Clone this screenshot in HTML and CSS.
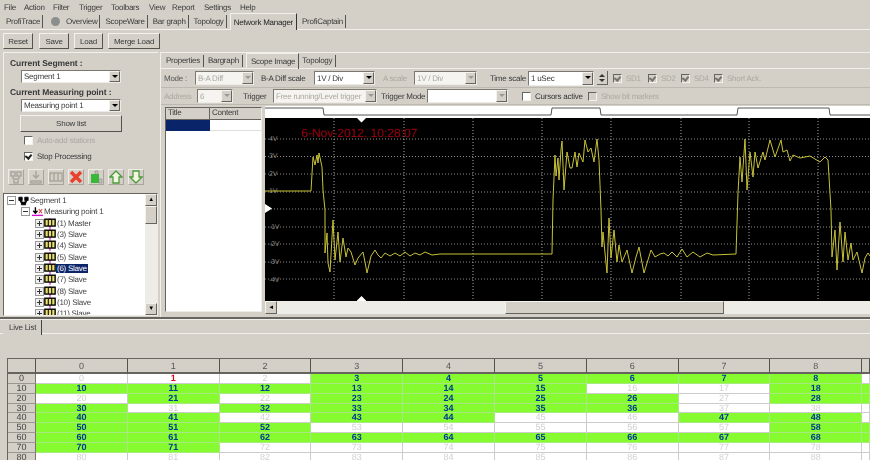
FILE: index.html
```html
<!DOCTYPE html>
<html lang="en">

<head>
    <meta charset="UTF-8">
    <title>ProfiTrace - Network Manager</title>
    <link rel="stylesheet" href="styles.css">
</head>

<body>
<svg class="defs" width="0" height="0">
    <symbol id="station" viewBox="0 0 14 12">
        <path d="M7 0V12" stroke="#d010d0" stroke-width="1.4"/>
        <rect x="1" y="1" width="12" height="8" fill="#e8e070" stroke="#000" stroke-width="1.6"/>
        <path d="M5 1V9M9 1V9" stroke="#000" stroke-width="1.2"/>
    </symbol>
    <symbol id="expand" viewBox="0 0 9 9">
        <rect x="0.5" y="0.5" width="8" height="8" fill="#eee" stroke="#999"/>
        <path d="M2 4.5H7M4.5 2V7" stroke="#333"/>
    </symbol>
    <symbol id="collapse" viewBox="0 0 9 9">
        <rect x="0.5" y="0.5" width="8" height="8" fill="#fff" stroke="#999"/>
        <path d="M2 4.5H7" stroke="#333"/>
    </symbol>
</svg>

<div class="menu">
    <span class="w-file">File</span><span class="w-action">Action</span><span class="w-filter">Filter</span><span class="w-trigger">Trigger</span><span class="w-toolbars">Toolbars</span><span class="w-view">View</span><span class="w-report">Report</span><span class="w-settings">Settings</span><span>Help</span>
</div>

<div class="main-tabs">
    <span class="main-tab">ProfiTrace</span>
    <span class="main-tab tab-overview"><i class="led"></i>Overview</span>
    <span class="main-tab">ScopeWare</span>
    <span class="main-tab">Bar graph</span>
    <span class="main-tab">Topology</span>
    <span class="main-tab active">Network Manager</span>
    <span class="main-tab">ProfiCaptain</span>
</div>

<div class="toolbar">
    <button class="btn btn-reset">Reset</button>
    <button class="btn btn-save">Save</button>
    <button class="btn btn-load">Load</button>
    <button class="btn btn-merge">Merge Load</button>
</div>

<div class="work">
    <div class="left">
        <div class="segment-panel">
            <div class="panel-title">Current Segment :</div>
            <div class="combo combo-left"><span>Segment 1</span><i class="drop"></i></div>
            <div class="panel-title title-point">Current Measuring point :</div>
            <div class="combo combo-left"><span>Measuring point 1</span><i class="drop"></i></div>
            <button class="btn btn-list">Show list</button>
            <label class="check-row muted"><i class="check"></i>Auto-add stations</label>
            <label class="check-row"><i class="check checked"></i>Stop Processing</label>
            <div class="icon-row">
                <span class="icon-btn"><svg width="14" height="14" viewBox="0 0 14 14"><path d="M2 2h4v4H2zM8 2h4v4H8zM5 9h4v4H5zM4 6v3M10 6v3" fill="none" stroke="#aaa69c" stroke-width="1.5"/></svg></span>
                <span class="icon-btn"><svg width="14" height="14" viewBox="0 0 14 14"><path d="M7 1v6M4 5l3 3 3-3M2 11h10v2H2z" fill="none" stroke="#aaa69c" stroke-width="1.5"/></svg></span>
                <span class="icon-btn"><svg width="14" height="14" viewBox="0 0 14 14"><path d="M1 3h12v8H1zM5 3v8M9 3v8" fill="none" stroke="#aaa69c" stroke-width="1.5"/></svg></span>
                <span class="icon-btn"><svg width="14" height="14" viewBox="0 0 14 14"><path d="M2 2L12 12M12 2L2 12" stroke="#e8402c" stroke-width="3.4"/></svg></span>
                <span class="icon-btn"><svg width="14" height="14" viewBox="0 0 14 14"><path d="M2 4h8v9H2z" fill="#38b838"/><path d="M6 1h3v3H6zM10 9h3v4h-3z" fill="#c8c4b8" stroke="#888" stroke-width=".6"/></svg></span>
                <span class="icon-btn"><svg width="14" height="14" viewBox="0 0 14 14"><path d="M7 1L13 7H10V13H4V7H1Z" fill="#f2f6e0" stroke="#4c9a3c" stroke-width="1.3"/></svg></span>
                <span class="icon-btn"><svg width="14" height="14" viewBox="0 0 14 14"><path d="M7 13L13 7H10V1H4V7H1Z" fill="#f2f6e0" stroke="#4c9a3c" stroke-width="1.3"/></svg></span>
            </div>
        </div>

        <div class="tree">
            <div class="tree-list">
                <div class="node"><svg class="toggle" width="9" height="9"><use href="#collapse"/></svg><svg class="node-icon" width="11" height="10" viewBox="0 0 13 11"><path d="M1 1h4v4H1zM8 1h4v4H8zM4 7h5v3H4zM3 5v2h3M10 5v2H7" fill="#000" stroke="#000"/></svg>Segment 1</div>
                <div class="node depth-1"><svg class="toggle" width="9" height="9"><use href="#collapse"/></svg><svg class="node-icon" width="11" height="10" viewBox="0 0 13 11"><path d="M0 9.5H13" stroke="#d010d0" stroke-width="1.6"/><path d="M4 0V6M1.5 4L4 7L6.5 4" fill="none" stroke="#000" stroke-width="1.6"/><path d="M8 2L12 7M12 2L8 7" stroke="#e03030" stroke-width="1.2"/></svg>Measuring point 1</div>
                <div class="node depth-2"><svg class="toggle" width="9" height="9"><use href="#expand"/></svg><svg class="station" width="12" height="11"><use href="#station"/></svg>(1) Master</div>
                <div class="node depth-2"><svg class="toggle" width="9" height="9"><use href="#expand"/></svg><svg class="station" width="12" height="11"><use href="#station"/></svg>(3) Slave</div>
                <div class="node depth-2"><svg class="toggle" width="9" height="9"><use href="#expand"/></svg><svg class="station" width="12" height="11"><use href="#station"/></svg>(4) Slave</div>
                <div class="node depth-2"><svg class="toggle" width="9" height="9"><use href="#expand"/></svg><svg class="station" width="12" height="11"><use href="#station"/></svg>(5) Slave</div>
                <div class="node depth-2"><svg class="toggle" width="9" height="9"><use href="#expand"/></svg><svg class="station" width="12" height="11"><use href="#station"/></svg><span class="selected">(6) Slave</span></div>
                <div class="node depth-2"><svg class="toggle" width="9" height="9"><use href="#expand"/></svg><svg class="station" width="12" height="11"><use href="#station"/></svg>(7) Slave</div>
                <div class="node depth-2"><svg class="toggle" width="9" height="9"><use href="#expand"/></svg><svg class="station" width="12" height="11"><use href="#station"/></svg>(8) Slave</div>
                <div class="node depth-2"><svg class="toggle" width="9" height="9"><use href="#expand"/></svg><svg class="station" width="12" height="11"><use href="#station"/></svg>(10) Slave</div>
                <div class="node depth-2"><svg class="toggle" width="9" height="9"><use href="#expand"/></svg><svg class="station" width="12" height="11"><use href="#station"/></svg>(11) Slave</div>
            </div>
            <div class="tree-scroll">
                <span class="arrow-btn">&#9650;</span>
                <span class="tree-thumb"></span>
                <span class="arrow-btn tree-down">&#9660;</span>
            </div>
        </div>
    </div>

    <div class="right">
        <div class="sub-tabs">
            <span class="sub-tab">Properties</span>
            <span class="sub-tab">Bargraph</span>
            <span class="sub-tab active">Scope Image</span>
            <span class="sub-tab">Topology</span>
        </div>
        <div class="control-row">
            <span class="lbl lbl-mode muted-dark">Mode :</span>
            <div class="combo off c-mode"><span>B-A Diff</span><i class="drop"></i></div>
            <span class="lbl lbl-diff">B-A Diff scale</span>
            <div class="combo c-diff"><span>1V / Div</span><i class="drop"></i></div>
            <span class="lbl lbl-a muted">A scale</span>
            <div class="combo off c-a"><span>1V / Div</span><i class="drop"></i></div>
            <span class="lbl lbl-time">Time scale</span>
            <div class="combo c-time"><span>1 uSec</span><i class="drop"></i></div>
            <span class="spin"><i class="spin-up"></i><i class="spin-down"></i></span>
            <label class="opt opt-1 muted"><i class="check checked off"></i>SD1</label>
            <label class="opt opt-2 muted"><i class="check checked off"></i>SD2</label>
            <label class="opt opt-3 muted"><i class="check checked off"></i>SD4</label>
            <label class="opt opt-4 muted"><i class="check checked off"></i>Short Ack.</label>
        </div>
        <div class="control-row row-two">
            <span class="lbl lbl-addr muted">Address</span>
            <div class="combo off c-addr"><span>6</span><i class="drop"></i></div>
            <span class="lbl lbl-trigger">Trigger</span>
            <div class="combo off c-trigger"><span>Free running/Level trigger</span><i class="drop"></i></div>
            <span class="lbl lbl-tmode">Trigger Mode</span>
            <div class="combo c-tmode"><span></span><i class="drop off-drop"></i></div>
            <label class="opt opt-cursor"><i class="check"></i>Cursors active</label>
            <label class="opt opt-bits muted"><i class="check off"></i>Show bit markers</label>
        </div>
        <div class="scope-area">
            <div class="info-table">
                <div class="info-head"><span class="info-title">Title</span><span class="info-content">Content</span></div>
                <div class="info-row"><span class="info-sel"></span><span class="info-empty"></span></div>
            </div>
            <div class="scope">
                <svg class="ruler" width="605" height="12" viewBox="265 106 605 12">
                    <polyline points="265,108 323,108 324,115 551,115 552,108 600,108 601,115 737,115 738,108 829,108 830,115 870,115" fill="none" stroke="#555" stroke-width="1"/>
                </svg>
                <svg class="screen" width="605" height="183" viewBox="265 118 605 183">
                    <rect x="265" y="118" width="605" height="183" fill="#000"/>
                    <g class="grid-h">
                        <path d="M265 139H870M265 156.500H870M265 174H870M265 192H870M265 209H870M265 227H870M265 244H870M265 262H870M265 279H870"/>
                    </g>
                    <g class="grid-v">
                        <path d="M334 118V301M404 118V301M473 118V301M542 118V301M611 118V301M681 118V301M749 118V301M818 118V301"/>
                    </g>
                    <g class="volts">
                        <text x="269" y="141">4V</text>
                        <text x="269" y="158">3V</text>
                        <text x="269" y="176">2V</text>
                        <text x="269" y="193">1V</text>
                        <text x="269" y="229">-1V</text>
                        <text x="269" y="246">-2V</text>
                        <text x="269" y="264">-3V</text>
                        <text x="269" y="282">-4V</text>
                    </g>
                    <text class="stamp" x="301" y="137">6-Nov-2012, 10:28:07</text>
                    <polyline class="trace" points="265,191 311,191 313,157 315,165 317,155 318,163 319,153 322,167 323,190 325,210 325,253 327,233 328,263 330,272 333,220 335,260 338,232 340,262 343,238 346,257 348,248 351,252 355,265 358,258 363,252 365,262 367,273 371,256 375,250 378,255 381,258 385,253 390,256 395,253 400,256 405,252 410,256 415,253 420,255 425,252 432,255 440,254 552,254 553,200 555,155 556,176 558,158 559,180 561,150 562,141 564,190 567,152 570,168 572,168 575,152 577,167 579,153 583,162 585,140 588,152 591,148 594,162 597,139 599,160 601,210 602,247 603,232 605,253 607,273 609,218 611,258 614,230 617,262 619,245 622,262 627,250 632,273 636,257 639,247 644,273 651,250 655,257 660,254 664,253 668,256 672,252 677,257 682,249 687,257 693,252 700,257 707,253 713,255 736,254 738,193 740,157 742,182 745,139 747,190 750,152 753,177 755,152 758,168 763,152 765,160 770,140 775,157 781,140 783,152 787,150 790,161 793,155 800,158 810,156 820,162 825,157 828,160 831,210 832,257 835,230 837,270 840,222 843,262 845,232 848,260 851,243 853,260 857,252 862,273 865,258 868,253 870,256"/>
                    <path d="M357 118H366L361.500 122.500Z M357 301V300.500L361.500 296L366 300.500V301Z" fill="#fff"/>
                    <path d="M265 204L272 208.500L265 213Z" fill="#fff"/>
                </svg>
                <div class="h-scroll">
                    <span class="arrow-btn left-btn">&#9668;</span>
                    <span class="track track-a"></span>
                    <span class="h-thumb"></span>
                    <span class="track"></span>
                </div>
            </div>
        </div>
    </div>
</div>

<div class="live-tabs"><span class="live-tab">Live List</span></div>

<div class="live-grid">
    <div class="corner"></div><div class="col">0</div><div class="col">1</div><div class="col">2</div><div class="col">3</div><div class="col">4</div><div class="col">5</div><div class="col">6</div><div class="col">7</div><div class="col">8</div><div class="col"></div>
    <div class="rh">0</div><div class="c">0</div><div class="c err">1</div><div class="c">2</div><div class="c on">3</div><div class="c on">4</div><div class="c on">5</div><div class="c on">6</div><div class="c on">7</div><div class="c on">8</div><div class="c"></div>
    <div class="rh">10</div><div class="c on">10</div><div class="c on">11</div><div class="c on">12</div><div class="c on">13</div><div class="c on">14</div><div class="c on">15</div><div class="c">16</div><div class="c">17</div><div class="c on">18</div><div class="c on"></div>
    <div class="rh">20</div><div class="c">20</div><div class="c on">21</div><div class="c">22</div><div class="c on">23</div><div class="c on">24</div><div class="c on">25</div><div class="c on">26</div><div class="c">27</div><div class="c on">28</div><div class="c on"></div>
    <div class="rh">30</div><div class="c on">30</div><div class="c">31</div><div class="c on">32</div><div class="c on">33</div><div class="c on">34</div><div class="c on">35</div><div class="c on">36</div><div class="c">37</div><div class="c">38</div><div class="c"></div>
    <div class="rh">40</div><div class="c on">40</div><div class="c on">41</div><div class="c">42</div><div class="c on">43</div><div class="c on">44</div><div class="c">45</div><div class="c">46</div><div class="c on">47</div><div class="c on">48</div><div class="c"></div>
    <div class="rh">50</div><div class="c on">50</div><div class="c on">51</div><div class="c on">52</div><div class="c">53</div><div class="c">54</div><div class="c">55</div><div class="c">56</div><div class="c">57</div><div class="c on">58</div><div class="c on"></div>
    <div class="rh">60</div><div class="c on">60</div><div class="c on">61</div><div class="c on">62</div><div class="c on">63</div><div class="c on">64</div><div class="c on">65</div><div class="c on">66</div><div class="c on">67</div><div class="c on">68</div><div class="c on"></div>
    <div class="rh">70</div><div class="c on">70</div><div class="c on">71</div><div class="c">72</div><div class="c">73</div><div class="c">74</div><div class="c">75</div><div class="c">76</div><div class="c">77</div><div class="c">78</div><div class="c"></div>
    <div class="rh">80</div><div class="c">80</div><div class="c">81</div><div class="c">82</div><div class="c">83</div><div class="c">84</div><div class="c">85</div><div class="c">86</div><div class="c">87</div><div class="c">88</div><div class="c"></div>
</div>
</body>

</html>
```

FILE: styles.css
```css
html, body {
    margin: 0;
    width: 870px;
    height: 460px;
    overflow: hidden;
}

body {
    background-color: #d4d0c8;
    color: #3a3a3a;
    font-family: "Liberation Sans", Arial, sans-serif;
    font-size: 8px;
    letter-spacing: -0.25px;
    text-rendering: geometricPrecision;
    filter: blur(0.3px);
}

.defs {
    position: absolute;
}

i {
    display: block;
    flex: none;
}

.muted {
    color: #aaa8a0;
}

.muted-dark {
    color: #555;
}

/* menu */

.menu {
    display: flex;
    height: 14px;
    align-items: center;
    padding-left: 4px;
    box-sizing: border-box;
}

.w-file { width: 20px; }
.w-action { width: 29px; }
.w-filter { width: 26px; }
.w-trigger { width: 32px; }
.w-toolbars { width: 38px; }
.w-view { width: 23px; }
.w-report { width: 32px; }
.w-settings { width: 36px; }

/* main tabs */

.main-tabs {
    display: flex;
    height: 15px;
    padding-left: 6px;
    align-items: center;
    border-bottom: 1px solid #f2f0ea;
    box-sizing: content-box;
}

.main-tab {
    display: flex;
    align-items: center;
    height: 13px;
    padding-right: 2px;
    margin-right: 5px;
    border-right: 1px solid #555;
    white-space: nowrap;
}

.main-tab.active {
    height: 16px;
    margin: 0 5px 0 -2px;
    padding: 0 3px;
    background-color: #d4d0c8;
    border-right: 1px solid #333;
    border-left: 1px solid #f2f0ea;
    border-top: 1px solid #f2f0ea;
    color: #222;
}

.led {
    width: 9px;
    height: 9px;
    margin: 0 6px 0 3px;
    border-radius: 50%;
    background-color: #8a8f8e;
}

/* buttons */

.btn {
    display: block;
    height: 16px;
    padding: 0;
    box-sizing: border-box;
    font: inherit;
    letter-spacing: inherit;
    color: inherit;
    background-color: #d4d0c8;
    border: 1px solid;
    border-color: #f4f2ec #55534e #55534e #f4f2ec;
}

.toolbar {
    display: flex;
    height: 22px;
    padding: 3px 0 0 3px;
    box-sizing: border-box;
}

.btn-reset { width: 30px; margin-right: 6px; }
.btn-save { width: 30px; margin-right: 5px; }
.btn-load { width: 29px; margin-right: 5px; }
.btn-merge { width: 52px; }

/* main area */

.work {
    display: flex;
    height: 265px;
    border-bottom: 2px solid #66645f;
}

.left {
    width: 155px;
    margin: 0 3px;
    flex: none;
    display: flex;
    flex-direction: column;
}

.segment-panel {
    height: 140px;
    box-sizing: border-box;
    border-top: 1px solid #f2f0ea;
    border-left: 1px solid #f2f0ea;
    padding: 4px 0 0 6px;
}

.panel-title {
    font-weight: bold;
    font-size: 8.500px;
    letter-spacing: -0.1px;
    height: 12px;
    line-height: 12px;
}

.title-point {
    margin-top: 3px;
}

.combo {
    display: flex;
    align-items: center;
    justify-content: space-between;
    height: 14px;
    box-sizing: border-box;
    background-color: #fff;
    border: 1px solid;
    border-color: #7a7870 #eeece6 #eeece6 #7a7870;
    padding-left: 2px;
    white-space: nowrap;
    overflow: hidden;
}

.combo.off {
    background-color: #f5f4f0;
    color: #aaa8a0;
}

.combo-left {
    width: 100px;
    margin: 1px 0 0 11px;
    height: 13px;
}

.drop {
    position: relative;
    width: 11px;
    height: 100%;
    background-color: #d4d0c8;
    border: 1px solid;
    border-color: #f4f2ec #66645f #66645f #f4f2ec;
    box-sizing: border-box;
}

.drop::after {
    content: "";
    position: absolute;
    left: 2px;
    top: 3px;
    border: 3px solid transparent;
    border-top: 3px solid #000;
    border-bottom: 0;
}

.off .drop::after,
.off-drop::after {
    border-top-color: #999;
}

.btn-list {
    width: 102px;
    height: 17px;
    margin: 3px 0 0 10px;
}

.check-row {
    display: flex;
    align-items: center;
    height: 16px;
    padding-left: 14px;
}

.check {
    position: relative;
    width: 9px;
    height: 9px;
    margin-right: 4px;
    background-color: #fff;
    border: 1px solid;
    border-color: #66645f #f4f2ec #f4f2ec #66645f;
    box-sizing: border-box;
}

.check.off {
    background-color: #d4d0c8;
}

.check.checked::after {
    content: "";
    position: absolute;
    left: 1px;
    top: 0;
    width: 3px;
    height: 4px;
    border: solid #222;
    border-width: 0 2px 2px 0;
    transform: rotate(40deg);
}

.check.off.checked::after {
    border-color: #77756e;
}

.icon-row {
    display: flex;
    gap: 4px;
    margin-top: 5px;
    margin-left: -2px;
}

.icon-btn {
    display: flex;
    align-items: center;
    justify-content: center;
    width: 16px;
    height: 16px;
    box-sizing: border-box;
    border: 1px solid;
    border-color: #eeece6 #a8a59c #a8a59c #eeece6;
}

/* tree */

.tree {
    display: flex;
    height: 123px;
    margin-top: 1px;
    box-sizing: border-box;
    background-color: #fff;
    border: 1px solid;
    border-color: #66645f #eeece6 #eeece6 #66645f;
    overflow: hidden;
}

.tree-list {
    flex: 1;
    padding: 1px 0 0 3px;
    color: #444;
}

.node {
    display: flex;
    align-items: center;
    height: 11.300px;
    white-space: nowrap;
}

.depth-1 { padding-left: 14px; }
.depth-2 { padding-left: 28px; }

.toggle {
    flex: none;
    margin-right: 2px;
}

.depth-2 .toggle {
    margin-right: 0;
}

.node-icon {
    flex: none;
    margin-right: 1px;
}

.station {
    flex: none;
    margin-right: 1px;
}

.selected {
    background-color: #0a246a;
    color: #fff;
    margin-left: -1px;
    padding: 0 1px;
}

.tree-scroll {
    display: flex;
    flex-direction: column;
    width: 12px;
    background-color: #eeece6;
}

.arrow-btn {
    display: flex;
    align-items: center;
    justify-content: center;
    width: 12px;
    height: 12px;
    flex: none;
    box-sizing: border-box;
    font-size: 6px;
    color: #000;
    background-color: #d4d0c8;
    border: 1px solid;
    border-color: #f4f2ec #66645f #66645f #f4f2ec;
}

.tree-thumb {
    height: 18px;
    box-sizing: border-box;
    background-color: #d4d0c8;
    border: 1px solid;
    border-color: #f4f2ec #66645f #66645f #f4f2ec;
}

.tree-down {
    margin-top: auto;
}

/* right side */

.right {
    flex: 1;
    min-width: 0;
    border-top: 1px solid #f2f0ea;
    border-left: 1px solid #f2f0ea;
    margin-left: -1px;
}

.sub-tabs {
    display: flex;
    align-items: center;
    height: 16px;
    padding-left: 5px;
    border-bottom: 1px solid #f2f0ea;
    box-sizing: border-box;
}

.sub-tab {
    display: flex;
    align-items: center;
    height: 12px;
    padding-right: 3px;
    margin-right: 4px;
    border-right: 1px solid #555;
}

.sub-tab.active {
    height: 15px;
    margin: 0 3px 0 -1px;
    padding: 0 3px 0 4px;
    border-left: 1px solid #f2f0ea;
    border-top: 1px solid #f2f0ea;
}

.control-row {
    display: flex;
    align-items: center;
    height: 19px;
    padding-left: 3px;
    white-space: nowrap;
    border-bottom: 1px solid #bdb9b0;
    box-sizing: border-box;
}

.row-two {
    height: 17px;
}

.lbl, .opt {
    display: flex;
    align-items: center;
    flex: none;
}

.lbl-mode { width: 31px; }
.lbl-diff { width: 53px; margin-left: 7px; }
.lbl-a { width: 31px; margin-left: 8px; }
.lbl-time { width: 38px; margin-left: 13px; }
.lbl-addr { width: 33px; }
.lbl-trigger { width: 30px; margin-left: 10px; }
.lbl-tmode { width: 46px; margin-left: 4px; }

.c-mode { width: 59px; }
.c-diff { width: 61px; }
.c-a { width: 63px; }
.c-time { width: 66px; height: 15px; }
.c-addr { width: 36px; }
.c-trigger { width: 104px; }
.c-tmode { width: 81px; }

.spin {
    display: flex;
    flex-direction: column;
    gap: 2px;
    align-items: center;
    justify-content: center;
    width: 11px;
    height: 14px;
    margin-left: 3px;
    border-bottom: 1px solid #66645f;
    border-right: 1px solid #66645f;
    box-sizing: border-box;
}

.spin-up {
    border: 3px solid transparent;
    border-bottom: 3px solid #333;
    border-top: 0;
}

.spin-down {
    border: 3px solid transparent;
    border-top: 3px solid #333;
    border-bottom: 0;
}

.opt-1 { margin-left: 5px; width: 35px; }
.opt-2 { width: 33px; }
.opt-3 { width: 33px; }
.opt-cursor { margin-left: 14px; width: 66px; color: #333; }

/* scope */

.scope-area {
    display: flex;
    padding: 1px 0 0 4px;
}

.info-table {
    width: 97px;
    height: 205px;
    margin-top: 1px;
    flex: none;
    box-sizing: border-box;
    background-color: #fff;
    border: 1px solid;
    border-color: #66645f #eeece6 #eeece6 #66645f;
}

.info-head {
    display: flex;
    height: 11px;
    background-color: #d4d0c8;
    border-bottom: 1px solid #66645f;
}

.info-title {
    width: 41px;
    padding-left: 2px;
    border-right: 1px solid #66645f;
}

.info-content {
    padding-left: 2px;
}

.info-row {
    display: flex;
    height: 11px;
}

.info-sel {
    width: 44px;
    background-color: #0a246a;
}

.info-empty {
    flex: 1;
    border-bottom: 1px solid #ddd;
}

.scope {
    width: 605px;
    margin-left: 3px;
    flex: none;
}

.ruler {
    display: block;
    background-color: #fff;
}

.screen {
    display: block;
}

.grid-h path {
    fill: none;
    stroke: #8c8c8c;
    stroke-width: 1;
    stroke-dasharray: 1 2;
}

.grid-v path {
    fill: none;
    stroke: #a8a8a8;
    stroke-width: 1;
    stroke-dasharray: 1 2;
}

.volts text {
    fill: #8a8a80;
    font-size: 7px;
}

.stamp {
    fill: #96000f;
    font-size: 12px;
    letter-spacing: 0;
}

.trace {
    fill: none;
    stroke: #c8c238;
    stroke-width: 1;
}

.h-scroll {
    display: flex;
    height: 13px;
    background-color: #eeece6;
}

.h-scroll .arrow-btn {
    height: 13px;
}

.track-a {
    width: 228px;
    flex: none;
}

.h-thumb {
    width: 219px;
    flex: none;
    box-sizing: border-box;
    background-color: #d4d0c8;
    border: 1px solid;
    border-color: #f4f2ec #66645f #66645f #f4f2ec;
}

/* live list */

.live-tabs {
    height: 15px;
    padding-left: 3px;
    box-sizing: border-box;
    border-top: 1px solid #f2f0ea;
    border-bottom: 1px solid #f2f0ea;
}

.live-tab {
    display: inline-flex;
    align-items: center;
    height: 15px;
    width: 39px;
    box-sizing: border-box;
    padding-left: 6px;
    background-color: #d4d0c8;
    border-right: 1px solid #444;
}

.live-grid {
    display: grid;
    grid-template-columns: 28px repeat(9, 91.800px) 1fr;
    grid-template-rows: 15px;
    grid-auto-rows: 9.850px;
    margin: 24px 0 0 7px;
    border-top: 1px solid #66645f;
    border-left: 1px solid #66645f;
    text-align: center;
    font-size: 9px;
    letter-spacing: 0;
    line-height: 10px;
}

.corner,
.col {
    border-right: 1px solid #55534e;
    border-bottom: 2px solid #66645f;
    box-sizing: border-box;
    line-height: 15px;
    color: #555;
}

.rh {
    box-sizing: border-box;
    border-right: 1px solid #77756e;
    border-bottom: 1px solid #9a978f;
    color: #444;
    line-height: 9px;
}

.c {
    box-sizing: border-box;
    background-color: #fff;
    color: #d0d0d0;
    border-bottom: 1px solid #ccc;
    border-right: 1px solid #ccc;
    line-height: 9px;
}

.c.on {
    background-color: #86fb2f;
    color: #00389a;
    font-weight: bold;
    border-color: #a8e880;
}

.c.err {
    color: #e8001c;
    font-weight: bold;
}
```
